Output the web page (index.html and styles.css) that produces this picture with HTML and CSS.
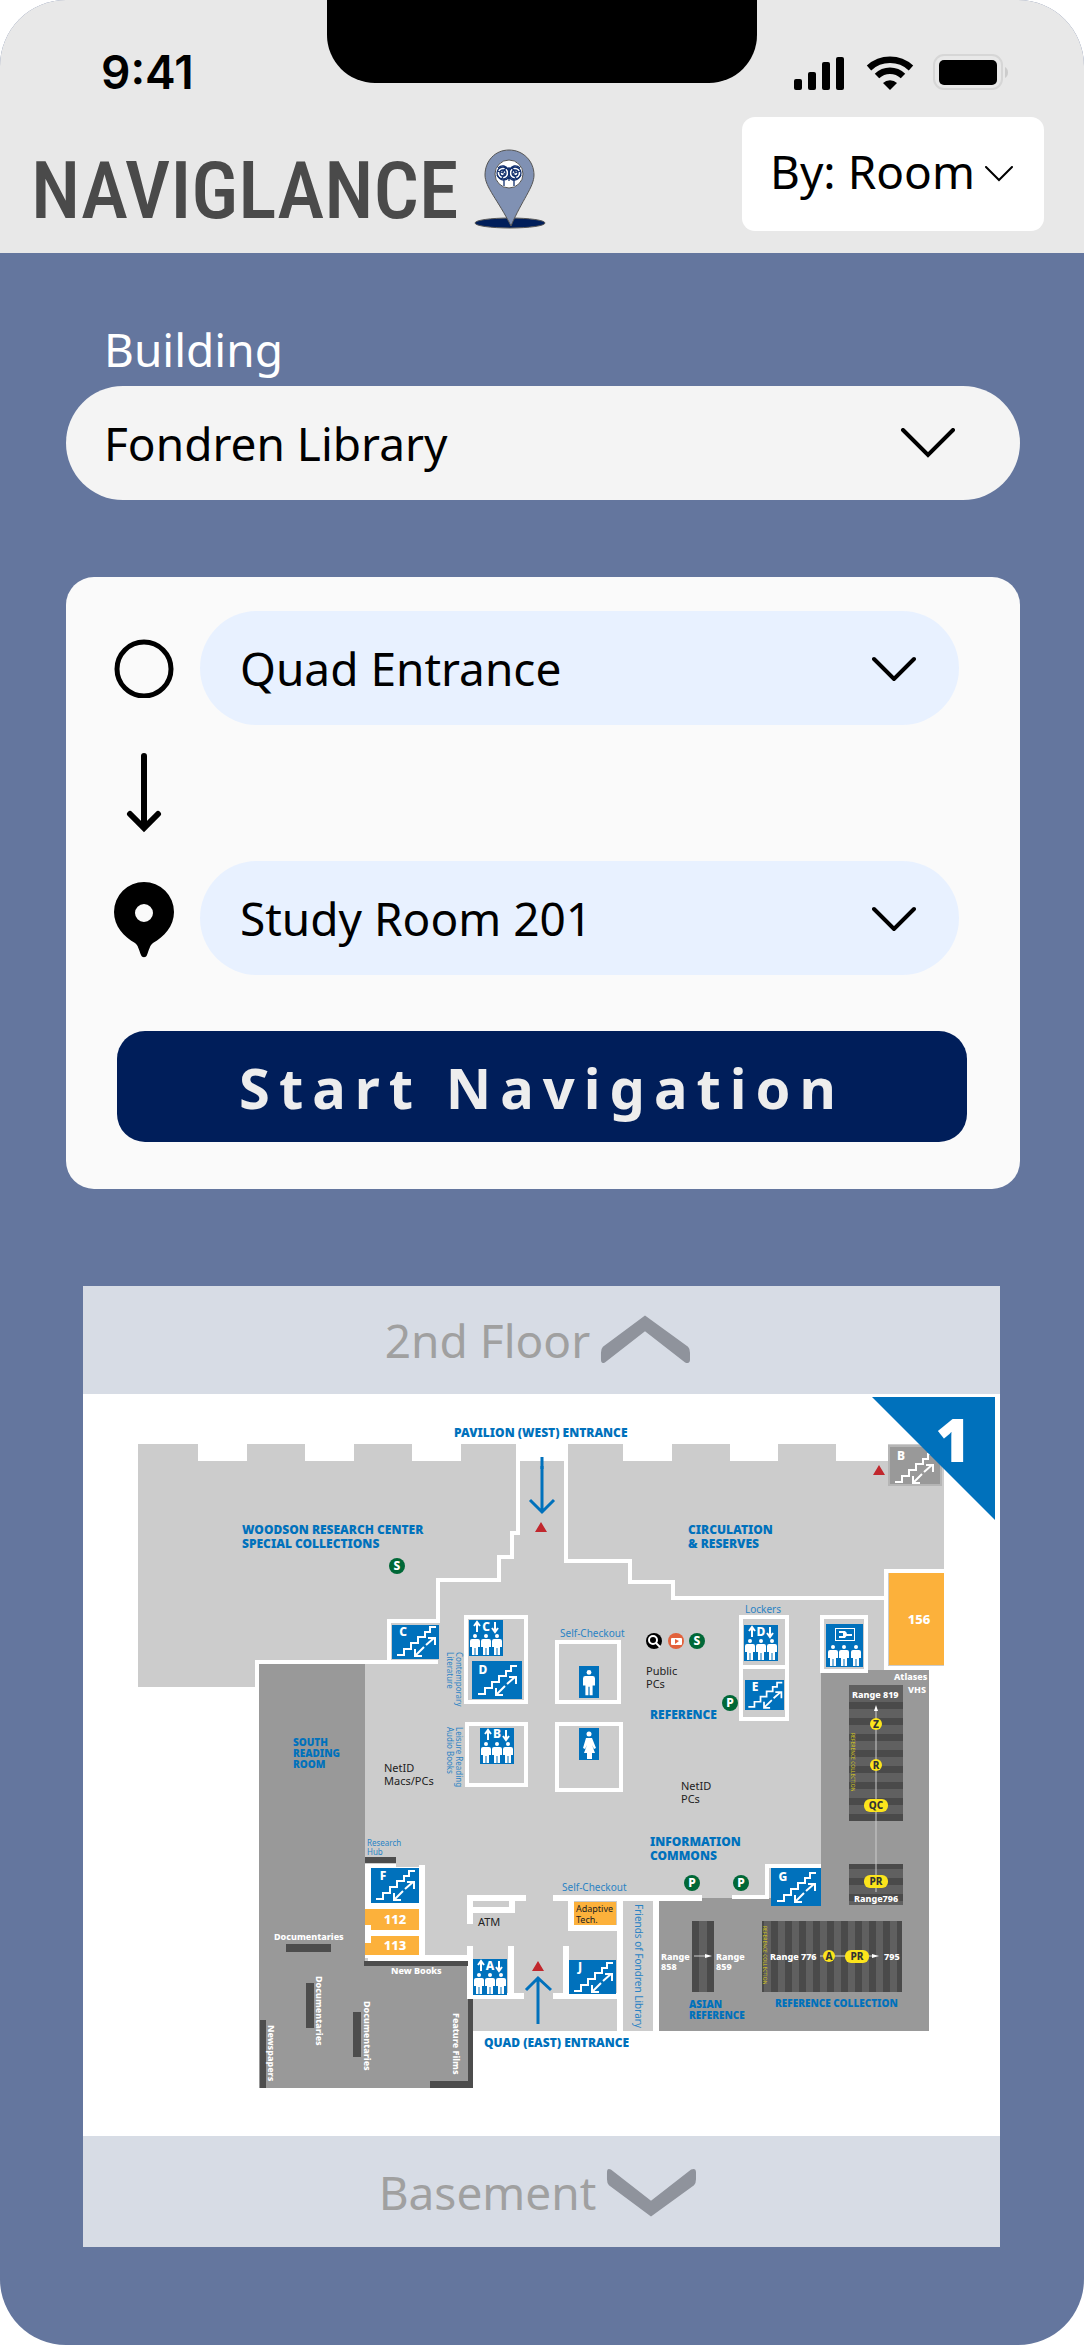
FILE: index.html
```html
<!DOCTYPE html>
<html lang="en">
<head>
<meta charset="utf-8">
<meta name="viewport" content="width=device-width, initial-scale=1">
<title>Naviglance</title>
<link rel="stylesheet" href="styles.css">
</head>
<body>
<div class="phone">
  <header class="header">
    <div class="notch"></div>
    <div class="status">
      <span class="time">9:41</span>
      <svg class="status-icons" width="216" height="38" viewBox="0 0 216 38" aria-hidden="true">
        <rect x="0" y="26" width="8" height="11" rx="2"/>
        <rect x="14" y="19" width="8" height="18" rx="2"/>
        <rect x="28" y="9" width="8" height="28" rx="2"/>
        <rect x="42" y="4" width="8" height="33" rx="2"/>
        <path d="M75 15a31 31 0 0 1 42 0M83 23a19 19 0 0 1 26 0" fill="none" stroke="#000" stroke-width="6.5"/>
        <path d="M96 37l-7-7a10 10 0 0 1 14 0z"/>
        <rect x="140" y="2" width="68" height="34" rx="10" fill="none" stroke="#d6d6d6" stroke-width="2"/>
        <rect x="145" y="7" width="58" height="25" rx="5"/>
        <path d="M211 14c4 2 4 9 0 11z" fill="#ccc"/>
      </svg>
    </div>
    <div class="topbar">
      <div class="brand">
        <span class="brand-name">NAVIGLANCE</span>
        <svg width="72" height="80" viewBox="0 0 72 80" aria-hidden="true">
          <ellipse cx="36" cy="74" rx="35" ry="5" fill="#001e5a" stroke="#555" stroke-width="1"/>
          <path d="M35 1c14 0 25 11 25 25 0 12-12 25-23 51C24 51 11 38 11 26 11 12 21 1 35 1z" fill="#8091b3" stroke="#555" stroke-width="1"/>
          <circle cx="35" cy="25" r="14" fill="#fff" stroke="#555"/>
          <g fill="none" stroke="#12306e" stroke-width="1.3">
            <circle cx="29" cy="24" r="6"/><circle cx="41" cy="24" r="6"/>
            <circle cx="29" cy="24" r="3"/><circle cx="41" cy="24" r="3"/>
            <path d="M24 19c4-4 8-2 11 2 3-4 7-6 11-2M23 26c4 7 9 6 12 2 3 4 8 5 12-2M35 18v14M30 30v7M40 30v7M23 22l7 2M47 22l-7 2M27 31l4-7M43 31l-4-7M32 19l-4 5M38 19l4 5"/>
          </g>
        </svg>
      </div>
      <div class="picker picker-mode">
        <select aria-label="Search mode"><option>By: Room</option></select>
        <svg width="28" height="16" viewBox="0 0 28 16" aria-hidden="true"><path d="M1 1l13 13L27 1" stroke-width="2"/></svg>
      </div>
    </div>
  </header>

  <main class="main">
    <label class="field-label" for="building">Building</label>
    <div class="picker picker-building">
      <select id="building"><option>Fondren Library</option></select>
      <svg width="56" height="30" viewBox="0 0 56 30" aria-hidden="true"><path d="M3 2l25 25L53 2" stroke-width="4"/></svg>
    </div>

    <form class="card">
      <div class="route">
        <svg width="60" height="60" viewBox="0 0 60 60" aria-hidden="true"><circle cx="30" cy="31" r="27" fill="none" stroke="#000" stroke-width="5"/></svg>
        <div class="picker picker-stop">
          <select aria-label="From"><option>Quad Entrance</option></select>
          <svg width="44" height="26" viewBox="0 0 44 26" aria-hidden="true"><path d="M2 4l20 20L42 4" stroke-width="4"/></svg>
        </div>
        <svg class="route-arrow" width="60" height="80" viewBox="0 0 60 80" aria-hidden="true"><path d="M30 3v70M16 61l14 14 14-14" fill="none" stroke="#000" stroke-width="6" stroke-linecap="round"/></svg>
        <svg class="route-pin" width="60" height="80" viewBox="0 0 60 80" aria-hidden="true"><path fill-rule="evenodd" d="M30 4a30 30 0 0 1 30 30c0 14-10 25-21 31-3 2-4 7-6 12-1 3-5 3-6 0-2-5-3-10-6-12C10 59 0 48 0 34A30 30 0 0 1 30 4zM30 26a9 9 0 1 0 0 18 9 9 0 0 0 0-18z"/></svg>
        <div class="picker picker-stop">
          <select aria-label="To"><option>Study Room 201</option></select>
          <svg width="44" height="26" viewBox="0 0 44 26" aria-hidden="true"><path d="M2 4l20 20L42 4" stroke-width="4"/></svg>
        </div>
      </div>
      <div class="actions"><button class="start" type="button">Start Navigation</button></div>
    </form>

    <section class="floors">
      <button class="floor floor-up" type="button">2nd Floor
        <svg width="90" height="50" viewBox="0 0 92 50" aria-hidden="true"><path d="M46 0l44 32q2 2 2 6v7q0 5-5 3L46 16 5 48q-4 2-4-3v-7q0-4 2-6z"/></svg>
      </button>
      <svg class="map" viewBox="83 1394 917 742" role="img" aria-label="Floor 1 map">
        <defs>
          <g id="man"><circle cx="5" cy="2" r="2"/><path d="M2 5h6q2 0 2 2v6H8V8v13H5.500V14h-1v7H2V8v5H0V7q0-2 2-2z"/></g>
          <g id="stairs" fill="none" stroke="#fff" stroke-width="2">
            <path d="M5 31h7v-6h7v-6h7v-6h7V8h5V3h6"/>
            <path d="M24 31l8-8M34 21l8-7M23 25v7h7M36 14h7v7"/>
          </g>
          <g id="lift">
            <rect width="34" height="36" fill="#0071bc"/>
            <use href="#man" x="1" y="14"/><use href="#man" x="12" y="14"/><use href="#man" x="23" y="14"/>
            <path d="M8 12V3M5 6l3-4 3 4M26 2v9M23 8l3 4 3-4" fill="none" stroke="#fff" stroke-width="2"/>
          </g>
          <pattern id="rows" x="849" y="1702" width="54" height="16" patternUnits="userSpaceOnUse"><rect width="54" height="16" fill="#606060"/><rect width="54" height="7" fill="#4a4a4a"/></pattern>
          <pattern id="cols" x="771" y="1921" width="14" height="71" patternUnits="userSpaceOnUse"><rect width="14" height="71" fill="#606060"/><rect width="7" height="71" fill="#4a4a4a"/></pattern>
        </defs>

        <path class="light" d="M138 1444h60v17h49v-17h58v17h49v-17h58v17h49v-17h59v17h48v-17h55v17h49v-17h58v17h48v-17h58v17h52v-17h56v226h-15v361H472v-60H259V1687H138z"/>
        <path class="dark" d="M259 1664h106v298h107v126H259zM821 1670h108v361H659v-133h162z"/>

        <g class="wall">
          <path d="M518 1443v90h-6v24h-13v23h-61v41h-49v41M438 1662H257v26"/>
          <path d="M566 1443v118h64v21h43v16h213v-27h58M886 1598v70h58"/>
          <rect x="466" y="1617" width="60" height="85"/>
          <rect x="467" y="1724" width="59" height="61"/>
          <rect x="557" y="1642" width="62" height="60"/>
          <rect x="557" y="1724" width="64" height="66"/>
          <path d="M741 1617h46v102h-46zM741 1667h46"/>
          <rect x="822" y="1617" width="44" height="54"/>
          <path d="M821 1866h-54v31h-35"/>
        </g>
        <g class="wall thick">
          <path d="M553 1898h149M571 1898v30h48M620 1898v133M656 1898v133M566 1946v50M553 1996h66"/>
          <path d="M470 1924v-26h56M470 1910h42v-12M470 1946v50h54M511 1946v50M368 1958h102M422 1865v93"/>
        </g>
        <path fill="#fff" d="M365 1864h31v3h23v91h-54z"/>

        <g fill="#fcb13b">
          <path d="M889 1573h55v92h-55zM574 1902h42v23h-42zM365 1909h54v21h-48v-5h-6zM371 1936h48v19h-54v-12h6z"/>
        </g>
        <path fill="#4d4d4d" d="M365 1857h31v6h-31zM364 1961h104v5H364zM286 1944h45v8h-45zM306 1983h8v45h-8zM353 2012h8v45h-8zM260 2020h6v68h-6zM468 1999h5v89h-43v-7h38z"/>

        <path fill="#606060" d="M849 1685h54v17h-54z"/>
        <rect x="849" y="1702" width="54" height="119" fill="url(#rows)"/>
        <rect x="849" y="1864" width="54" height="41" fill="url(#rows)"/>
        <rect x="762" y="1921" width="140" height="71" fill="url(#cols)"/>
        <rect x="692" y="1921" width="22" height="71" fill="#4a4a4a"/>
        <rect x="699" y="1921" width="8" height="71" fill="#606060"/>
        <path d="M876 1709v183M694 1956h12M820 1956h52" stroke="#ccc" fill="none"/>
        <path fill="#fff" d="M874 1711l2-6 2 6zM705 1954l7 2-7 2zM872 1954l7 2-7 2z"/>
        <g fill="#fce41c">
          <circle cx="876" cy="1724" r="6"/><circle cx="876" cy="1765" r="6"/><circle cx="829" cy="1956" r="6"/>
          <rect x="864" y="1799" width="24" height="13" rx="6"/><rect x="864" y="1875" width="24" height="13" rx="6"/><rect x="845" y="1950" width="24" height="13" rx="6"/>
        </g>

        <g fill="#0071bc">
          <rect x="392" y="1625" width="47" height="34"/><rect x="472" y="1661" width="50" height="38"/>
          <rect x="745" y="1680" width="39" height="30"/><rect x="371" y="1868" width="48" height="35"/>
          <rect x="771" y="1868" width="50" height="38"/><rect x="569" y="1960" width="47" height="34"/>
          <rect x="579" y="1666" width="20" height="32"/><rect x="579" y="1728" width="20" height="32"/>
          <rect x="826" y="1624" width="37" height="43"/>
        </g>
        <rect x="889" y="1446" width="52" height="39" fill="#999" stroke="#b5b5b5" stroke-width="2"/>
        <use href="#stairs" x="392" y="1624"/><use href="#stairs" x="473" y="1663"/>
        <use href="#stairs" transform="translate(744 1680) scale(.87)"/><use href="#stairs" x="371" y="1868"/>
        <use href="#stairs" x="772" y="1870"/><use href="#stairs" x="569" y="1960"/><use href="#stairs" x="890" y="1451"/>
        <use href="#lift" x="469" y="1620"/><use href="#lift" x="480" y="1728"/><use href="#lift" x="744" y="1625"/><use href="#lift" x="473" y="1959"/>
        <g fill="#fff">
          <use href="#man" transform="translate(583 1670) scale(1.200)"/>
          <circle cx="589" cy="1734" r="2.500"/><path d="M586 1738h6l4 10-2 1-2-4 3 8h-3v6h-5v-6h-3l3-8-2 4-2-1z"/>
          <use href="#man" x="828" y="1645"/><use href="#man" x="839" y="1645"/><use href="#man" x="851" y="1645"/>
          <path d="M835 1628h20v13h-20zM836 1629v11h18v-11z" fill-rule="evenodd"/>
          <path d="M839 1631h6q4 3 0 7h-6v-2h4v-3h-4zM846 1634h6v2h-6z"/>
        </g>
        <path fill="#0071bc" d="M872 1397h123v123z"/>
        <path d="M542 1466v46M530 1500l12 12 12-12" class="arrow"/>
        <path d="M542 1457v12" class="arrow"/>
        <path d="M538 2024v-46M526 1990l12-12 13 12" class="arrow"/>
        <path fill="#c1272d" d="M541 1522l6 10h-12zM879 1465l6 10h-12zM538 1961l6 10h-12z"/>
        <g fill="#006837">
          <circle cx="397" cy="1566" r="8"/><circle cx="697" cy="1641" r="8"/><circle cx="730" cy="1703" r="8"/><circle cx="692" cy="1883" r="8"/><circle cx="741" cy="1883" r="8"/>
        </g>
        <circle cx="654" cy="1641" r="8"/><circle cx="653" cy="1640" r="4" fill="none" stroke="#fff" stroke-width="2"/><path d="M656 1643l4 4" stroke="#fff" stroke-width="2"/>
        <circle cx="676" cy="1641" r="8" fill="#e2613b"/><rect x="671" y="1638" width="11" height="7" rx="1" fill="#fff"/><path d="M675 1639l4 2-4 3z" fill="#e2613b"/>

        <g class="t-blue">
          <text x="454" y="1437">PAVILION (WEST) ENTRANCE</text>
          <text x="242" y="1534">WOODSON RESEARCH CENTER</text><text x="242" y="1548">SPECIAL COLLECTIONS</text>
          <text x="688" y="1534">CIRCULATION</text><text x="688" y="1548">&amp; RESERVES</text>
          <text x="650" y="1719">REFERENCE</text>
          <text x="650" y="1846">INFORMATION</text><text x="650" y="1860">COMMONS</text>
          <text x="484" y="2047">QUAD (EAST) ENTRANCE</text>
        </g>
        <g class="t-blue small">
          <text x="293" y="1746">SOUTH</text><text x="293" y="1757">READING</text><text x="293" y="1768">ROOM</text>
          <text x="689" y="2008">ASIAN</text><text x="689" y="2019">REFERENCE</text>
          <text x="775" y="2007">REFERENCE COLLECTION</text>
        </g>
        <g class="t-note">
          <text x="560" y="1637">Self-Checkout</text><text x="745" y="1613">Lockers</text><text x="562" y="1891">Self-Checkout</text>
          <text transform="translate(635 1904) rotate(90)">Friends of Fondren Library</text>
        </g>
        <g class="t-note tiny">
          <text x="367" y="1846">Research</text><text x="367" y="1855">Hub</text>
          <text transform="translate(456 1652) rotate(90)">Contemporary</text><text transform="translate(447 1652) rotate(90)">Literature</text>
          <text transform="translate(456 1727) rotate(90)">Leisure Reading</text><text transform="translate(447 1727) rotate(90)">Audio Books</text>
        </g>
        <g class="t-black">
          <text x="646" y="1675">Public</text><text x="646" y="1688">PCs</text>
          <text x="384" y="1772">NetID</text><text x="384" y="1785">Macs/PCs</text>
          <text x="681" y="1790">NetID</text><text x="681" y="1803">PCs</text>
          <text x="478" y="1926">ATM</text>
        </g>
        <g class="t-tech"><text x="576" y="1912">Adaptive</text><text x="576" y="1923">Tech.</text></g>
        <g class="t-white">
          <text x="274" y="1940">Documentaries</text><text x="391" y="1974">New Books</text>
          <text transform="translate(316 1976) rotate(90)">Documentaries</text><text transform="translate(364 2001) rotate(90)">Documentaries</text>
          <text transform="translate(268 2025) rotate(90)">Newspapers</text><text transform="translate(453 2013) rotate(90)">Feature Films</text>
          <text x="894" y="1680">Atlases</text><text x="908" y="1693">VHS</text><text x="852" y="1698">Range 819</text>
          <text x="854" y="1902">Range796</text><text x="661" y="1960">Range</text><text x="661" y="1970">858</text>
          <text x="716" y="1960">Range</text><text x="716" y="1970">859</text><text x="770" y="1960">Range 776</text><text x="884" y="1960">795</text>
        </g>
        <g class="t-room">
          <text x="919" y="1624">156</text><text x="395" y="1924">112</text><text x="395" y="1950">113</text>
        </g>
        <g class="t-sign">
          <text x="403" y="1636">C</text><text x="483" y="1674">D</text><text x="755" y="1691">E</text><text x="383" y="1880">F</text><text x="783" y="1881">G</text><text x="580" y="1971">J</text><text x="901" y="1460">B</text>
          <text x="486" y="1631">C</text><text x="497" y="1738">B</text><text x="761" y="1636">D</text><text x="490" y="1970">A</text>
          <text x="397" y="1570">S</text><text x="697" y="1645">S</text><text x="730" y="1707">P</text><text x="692" y="1887">P</text><text x="741" y="1887">P</text>
        </g>
        <g class="t-badge">
          <text x="876" y="1728">Z</text><text x="876" y="1769">R</text><text x="876" y="1809">QC</text><text x="876" y="1885">PR</text><text x="829" y="1960">A</text><text x="857" y="1960">PR</text>
        </g>
        <g class="t-shelf">
          <text transform="translate(851 1733) rotate(90)">REFERENCE COLLECTION</text>
          <text transform="translate(763 1926) rotate(90)">REFERENCE COLLECTION</text>
        </g>
        <text x="953" y="1462" class="t-floor">1</text>
      </svg>
      <button class="floor floor-down" type="button">Basement
        <svg width="90" height="50" viewBox="0 0 92 50" aria-hidden="true"><path d="M46 50l44-32q2-2 2-6V5q0-5-5-3L46 34 5 2Q1 0 1 5v7q0 4 2 6z"/></svg>
      </button>
    </section>
  </main>
</div>
</body>
</html>
```
FILE: styles.css
```css
* { box-sizing: border-box; }

body {
  margin: 0;
  background: #fff;
  font-family: "Noto Sans", sans-serif;
  font-size: 46px;
  color: #000;
}

select, button { font: inherit; color: inherit; border: 0; }

.phone {
  min-height: 100vh;
  border-radius: 66px;
  overflow: hidden;
  background: #64769e;
}

/* Header */
.header {
  position: relative;
  background: #e8e8e8;
  padding-bottom: 22px;
}

.notch {
  position: absolute;
  top: 0;
  left: 50%;
  width: 430px;
  height: 83px;
  margin-left: -215px;
  border-radius: 0 0 48px 48px;
  background: #000;
}

.status {
  display: flex;
  justify-content: space-between;
  align-items: center;
  padding: 44px 74px 17px 101px;
}

.time {
  font-family: Inter, sans-serif;
  font-size: 46px;
  line-height: 56px;
  font-weight: 600;
}

.topbar {
  display: flex;
  justify-content: space-between;
  align-items: center;
  padding: 0 40px 0 31px;
}

.brand {
  display: flex;
  align-items: flex-end;
  gap: 16px;
  padding-top: 22px;
}

.brand-name {
  padding-top: 12px;
  font-family: "Roboto Condensed", Roboto, sans-serif;
  font-size: 80px;
  line-height: 76px;
  font-weight: 500;
  color: #4a4a4a;
}

/* Drop-downs with a drawn chevron over the right end */
.picker {
  display: grid;
  align-items: center;
}

.picker > * { grid-area: 1 / 1; }

.picker select {
  appearance: none;
  width: 100%;
  height: 114px;
  padding: 0 38px;
  border-radius: 57px;
}

.picker svg {
  justify-self: end;
  pointer-events: none;
  fill: none;
  stroke: #000;
  stroke-linecap: round;
}

.picker-mode { width: 302px; }
.picker-mode select { padding: 0 28px 6px; border-radius: 13px; background: #fff; }
.picker-mode svg { margin-right: 31px; }

.picker-building select { background: #f4f4f4; }
.picker-building svg { margin-right: 64px; }

.picker-stop { margin-right: 8px; }
.picker-stop select { background: #e8f1ff; padding: 0 40px; }
.picker-stop svg { margin-right: 43px; }

/* Main */
.main { padding: 64px 64px 98px 66px; }

.field-label {
  display: block;
  padding: 0 38px;
  margin-bottom: 5px;
  line-height: 64px;
  color: #fff;
}

.card {
  margin-top: 77px;
  padding: 34px 53px 47px 48px;
  border-radius: 28px;
  background: #fafafa;
}

.route {
  display: grid;
  grid-template-columns: 60px 1fr;
  grid-template-rows: 114px 136px 114px;
  column-gap: 26px;
  align-items: center;
}

.route-arrow { grid-column: 1 / -1; }

.actions { padding: 56px 0 0 3px; }

.start {
  display: block;
  width: 100%;
  height: 111px;
  border-radius: 28px;
  background: #001e5a;
  color: #ededed;
  font-size: 56px;
  font-weight: 700;
  letter-spacing: 9px;
}

/* Floor map */
.floors {
  margin: 97px 20px 0 17px;
  background: #fff;
}

.floor {
  display: flex;
  justify-content: center;
  align-items: center;
  gap: 10px;
  width: 100%;
  padding: 0 8px 0 0;
  background: #d7dce5;
  color: #a0a0a0;
}

.floor-up { height: 108px; }
.floor-down { height: 111px; }

.floor svg { fill: #8f939c; }

.map { display: block; width: 100%; }

.light { fill: #ccc; }
.dark { fill: #999; }
.wall { fill: none; stroke: #fff; stroke-width: 4px; }
.thick { stroke-width: 6px; }
.map #lift use { fill: #fff; }
.arrow { fill: none; stroke: #0071bc; stroke-width: 3px; }

.t-blue { fill: #0071bc; font-size: 12px; font-weight: 900; }
.small { font-size: 10px; }
.t-note { fill: #2a83c4; font-size: 10px; }
.tiny { font-size: 8px; }
.t-black { fill: #222; font-size: 11px; }
.t-tech { fill: #222; font-size: 9px; }
.t-white { fill: #fff; font-size: 9px; font-weight: 800; }
.t-room { fill: #fff; font-size: 13px; font-weight: 800; text-anchor: middle; }
.t-sign { fill: #fff; font-size: 12px; font-weight: 800; text-anchor: middle; }
.t-badge { fill: #333; font-size: 10px; font-weight: 800; text-anchor: middle; }
.t-shelf { fill: #d8c81c; font-size: 5px; }
.t-floor { fill: #fff; font-size: 60px; font-weight: 900; text-anchor: middle; }
```
